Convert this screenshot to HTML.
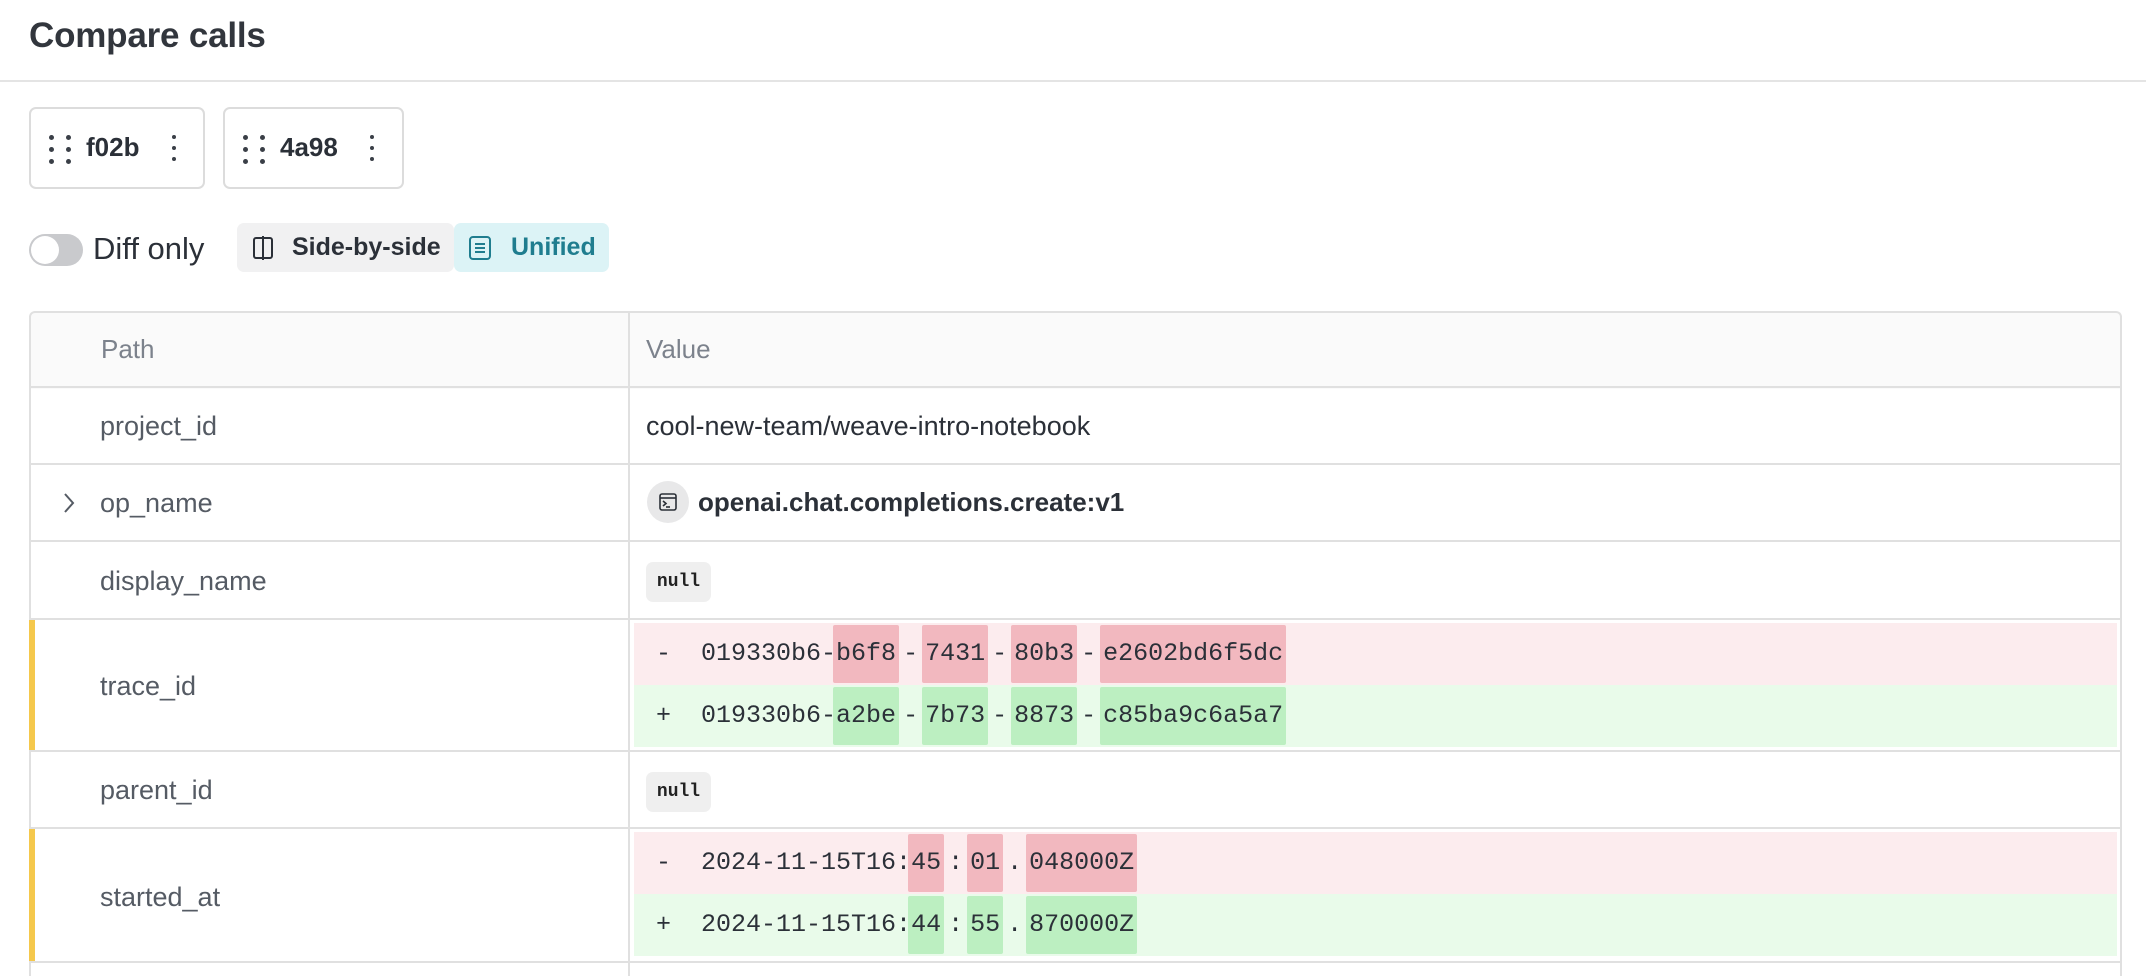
<!DOCTYPE html>
<html><head><meta charset="utf-8"><style>
*{box-sizing:border-box;margin:0;padding:0}
html{width:2146px;height:976px;overflow:hidden}
body{width:2146px;height:976px;overflow:hidden;background:#fff;font-family:"Liberation Sans",sans-serif;color:#2b3038;position:relative}
.a{position:absolute}
.title{left:29px;top:16px;font-size:35px;font-weight:bold;color:#32363d;letter-spacing:-0.2px}
.hl{left:0;top:80px;width:2146px;height:2px;background:#e4e4e4}
.chip{top:107px;height:82px;border:2px solid #dcdcdc;border-radius:7px}
.dot{position:absolute;width:5px;height:5px;border-radius:50%;background:#3a3f47}
.chipt{position:absolute;top:23px;font-size:26px;font-weight:bold;color:#2b3038}
.tog{left:29px;top:234px;width:54px;height:32px;border-radius:16px;background:#c9cacd}
.tog:after{content:"";position:absolute;left:2px;top:2px;width:28px;height:28px;border-radius:50%;background:#fff}
.btn{top:223px;height:49px;border-radius:7px;font-size:25px;font-weight:bold;line-height:49px}
.tbl{left:29px;top:311px;width:2093px;height:665px;border:2px solid #e0e0e0;border-bottom:none;border-radius:6px 6px 0 0}
.row{position:absolute;left:29px;width:2093px;border-top:2px solid #e0e0e0}
.vd{left:628px;top:311px;width:2px;height:665px;background:#e0e0e0}
.path{position:absolute;left:71px;font-size:27px;color:#555b64}
.val{position:absolute;left:617px;font-size:27px;color:#2b3038}
.null{position:absolute;left:617px;width:65px;height:40px;border-radius:7px;background:#efefef;font-family:"Liberation Mono",monospace;font-weight:bold;font-size:18px;line-height:40px;text-align:center;color:#222}
.ybar{position:absolute;left:29px;width:6px;background:#f5c84c}
.dl{position:absolute;left:634px;width:1483px;height:62px;font-family:"Liberation Mono",monospace;font-size:25px;line-height:62px;color:#2b3038;white-space:pre}
.m{background:#fcecee}.p{background:#e9fbea}
.dl b{font-weight:normal;display:inline-block;padding:0 3px;border-radius:2px;height:58px;line-height:58px;vertical-align:top;margin-top:2px}
.m b{background:#f2b8bf}.p b{background:#bcefc1}
.dl i{font-style:normal;display:inline-block;margin:0 4px}
</style></head><body>
<div class="a title">Compare calls</div>
<div class="a hl"></div>

<div class="a chip" style="left:29px;width:176px">
 <div class="dot" style="left:18px;top:26px"></div><div class="dot" style="left:35px;top:26px"></div>
 <div class="dot" style="left:18px;top:38px"></div><div class="dot" style="left:35px;top:38px"></div>
 <div class="dot" style="left:18px;top:50px"></div><div class="dot" style="left:35px;top:50px"></div>
 <div class="chipt" style="left:55px">f02b</div>
 <div class="dot" style="left:141px;top:26px;width:4px;height:4px"></div><div class="dot" style="left:141px;top:37px;width:4px;height:4px"></div><div class="dot" style="left:141px;top:48px;width:4px;height:4px"></div>
</div>
<div class="a chip" style="left:223px;width:181px">
 <div class="dot" style="left:18px;top:26px"></div><div class="dot" style="left:35px;top:26px"></div>
 <div class="dot" style="left:18px;top:38px"></div><div class="dot" style="left:35px;top:38px"></div>
 <div class="dot" style="left:18px;top:50px"></div><div class="dot" style="left:35px;top:50px"></div>
 <div class="chipt" style="left:55px">4a98</div>
 <div class="dot" style="left:145px;top:26px;width:4px;height:4px"></div><div class="dot" style="left:145px;top:37px;width:4px;height:4px"></div><div class="dot" style="left:145px;top:48px;width:4px;height:4px"></div>
</div>

<div class="a tog"></div>
<div class="a" style="left:93px;top:231px;font-size:31px;color:#2b3038">Diff only</div>
<div class="a btn" style="left:237px;width:217px;background:#f1f1f2;color:#2b3038">
 <svg class="a" style="left:14px;top:12px" width="24" height="26" viewBox="0 0 24 26" fill="none" stroke="#2b3038" stroke-width="2"><rect x="3" y="3" width="18" height="20" rx="2"/><line x1="12" y1="1" x2="12" y2="25"/></svg>
 <span style="position:absolute;left:55px">Side-by-side</span></div>
<div class="a btn" style="left:454px;width:155px;background:#dcf3f6;color:#1f7d8f">
 <svg class="a" style="left:14px;top:12px" width="24" height="26" viewBox="0 0 24 26" fill="none" stroke="#1f7d8f" stroke-width="2"><rect x="2" y="2" width="20" height="22" rx="3"/><line x1="7" y1="9" x2="17" y2="9"/><line x1="7" y1="13" x2="17" y2="13"/><line x1="7" y1="17" x2="17" y2="17"/></svg>
 <span style="position:absolute;left:57px">Unified</span></div>

<div class="a tbl" style="background:linear-gradient(#fafafa 0,#fafafa 76px,#fff 76px)"></div>
<div class="a" style="left:101px;top:334px;font-size:26px;color:#7c828c">Path</div>
<div class="a" style="left:646px;top:334px;font-size:26px;color:#7c828c">Value</div>

<div class="row" style="top:386px;height:78px"><div class="path" style="top:23px">project_id</div><div class="val" style="top:23px">cool-new-team/weave-intro-notebook</div></div>
<div class="row" style="top:463px;height:78px">
 <svg style="position:absolute;left:33px;top:27px" width="14" height="22" viewBox="0 0 14 22" fill="none" stroke="#555b64" stroke-width="2"><polyline points="3,2 11,11 3,20"/></svg>
 <div class="path" style="top:23px">op_name</div>
 <div style="position:absolute;left:618px;top:16px;width:42px;height:42px;border-radius:50%;background:#e8e8e9">
  <svg style="position:absolute;left:11px;top:11px" width="20" height="20" viewBox="0 0 20 20" fill="none" stroke="#2b3038" stroke-width="1.6"><rect x="2" y="2" width="16" height="16" rx="2"/><line x1="2" y1="6" x2="18" y2="6"/><polyline points="5,9 8,11.5 5,14"/><line x1="8" y1="15" x2="12" y2="15"/></svg></div>
 <div class="val" style="left:669px;top:22px;font-weight:bold;font-size:26px">openai.chat.completions.create:v1</div></div>
<div class="row" style="top:540px;height:80px"><div class="path" style="top:24px">display_name</div><div class="null" style="top:20px">null</div></div>
<div class="row" style="top:618px;height:134px"><div class="ybar" style="left:0;top:0;height:132px"></div><div class="path" style="top:51px">trace_id</div></div>
<div class="dl m" style="top:623px"><i style="margin:0 0 0 22px">-</i>  019330b6-<b style="margin-left:-3px">b6f8</b><i>-</i><b>7431</b><i>-</i><b>80b3</b><i>-</i><b>e2602bd6f5dc</b></div>
<div class="dl p" style="top:685px"><i style="margin:0 0 0 22px">+</i>  019330b6-<b style="margin-left:-3px">a2be</b><i>-</i><b>7b73</b><i>-</i><b>8873</b><i>-</i><b>c85ba9c6a5a7</b></div>
<div class="row" style="top:750px;height:79px"><div class="path" style="top:23px">parent_id</div><div class="null" style="top:20px">null</div></div>
<div class="row" style="top:827px;height:136px"><div class="ybar" style="left:0;top:0;height:134px"></div><div class="path" style="top:53px">started_at</div></div>
<div class="dl m" style="top:832px"><i style="margin:0 0 0 22px">-</i>  2024-11-15T16:<b style="margin-left:-3px">45</b><i>:</i><b>01</b><i>.</i><b>048000Z</b></div>
<div class="dl p" style="top:894px"><i style="margin:0 0 0 22px">+</i>  2024-11-15T16:<b style="margin-left:-3px">44</b><i>:</i><b>55</b><i>.</i><b>870000Z</b></div>
<div class="row" style="top:961px;height:15px"></div>
<div class="a vd"></div>
</body></html>
